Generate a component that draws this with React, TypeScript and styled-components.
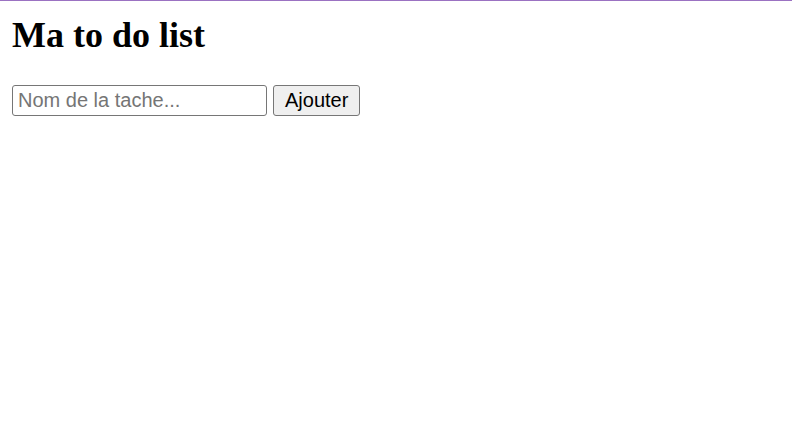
import React, { useState } from "react";
import styled, { createGlobalStyle } from "styled-components";

const GlobalStyle = createGlobalStyle`
  html, body {
    margin: 0;
    padding: 0;
    background: #fff;
  }
  body {
    border-top: 1px solid #9b72c2;
    font-family: "Liberation Serif", "Times New Roman", serif;
  }
`;

const Page = styled.div`
  padding: 14px 12px;
`;

const Title = styled.h1`
  margin: 0;
  font-size: 36px;
  line-height: 40px;
  font-weight: bold;
  color: #000;
`;

const Form = styled.form`
  display: flex;
  align-items: center;
  gap: 6px;
  margin-top: 30px;
`;

const TaskInput = styled.input`
  box-sizing: border-box;
  width: 255px;
  height: 31px;
  padding: 0 5px;
  border: 1px solid #767676;
  border-radius: 3px;
  font-family: "Liberation Sans", Arial, sans-serif;
  font-size: 20px;
  color: #000;
  outline: none;

  &::placeholder {
    color: #757575;
  }
`;

const AddButton = styled.button`
  box-sizing: border-box;
  height: 31px;
  padding: 0 11px;
  border: 1px solid #767676;
  border-radius: 3px;
  background: #efefef;
  font-family: "Liberation Sans", Arial, sans-serif;
  font-size: 20px;
  color: #000;
  cursor: pointer;
`;

const TaskList = styled.ul`
  margin: 12px 0 0;
  padding-left: 30px;
  font-family: "Liberation Sans", Arial, sans-serif;
  font-size: 20px;
`;

const App: React.FC = () => {
  const [tasks, setTasks] = useState<string[]>([]);
  const [value, setValue] = useState("");

  const handleSubmit = (e: React.FormEvent) => {
    e.preventDefault();
    if (!value.trim()) return;
    setTasks([...tasks, value.trim()]);
    setValue("");
  };

  return (
    <>
      <GlobalStyle />
      <Page>
        <Title>Ma to do list</Title>
        <Form onSubmit={handleSubmit}>
          <TaskInput
            placeholder="Nom de la tache..."
            value={value}
            onChange={(e) => setValue(e.target.value)}
          />
          <AddButton type="submit">Ajouter</AddButton>
        </Form>
        {tasks.length > 0 && (
          <TaskList>
            {tasks.map((t, i) => (
              <li key={i}>{t}</li>
            ))}
          </TaskList>
        )}
      </Page>
    </>
  );
};

export default App;
